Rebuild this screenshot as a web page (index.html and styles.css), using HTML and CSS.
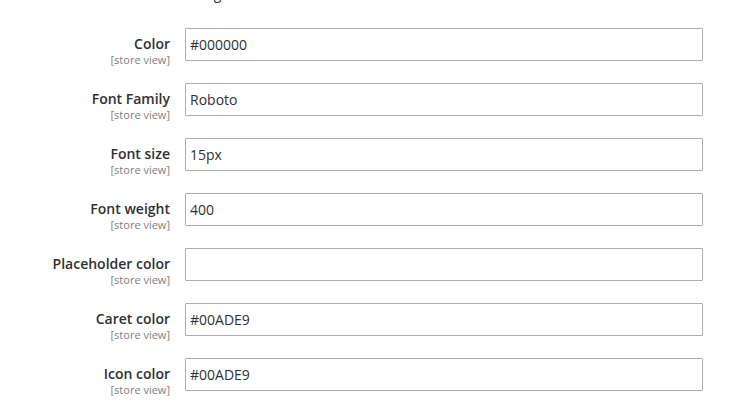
FILE: index.html
```html
<!DOCTYPE html>
<html>
<head>
<meta charset="utf-8">
<link rel="stylesheet" href="styles.css">
</head>
<body>
<div class="top-note"><span class="top-text">Settings</span></div>
<div class="form">
  <div class="row"><div class="label"><span class="name">Color</span><span class="scope">[store view]</span></div><div class="field"><input class="input" value="#000000"></div></div>
  <div class="row"><div class="label"><span class="name">Font Family</span><span class="scope">[store view]</span></div><div class="field"><input class="input" value="Roboto"></div></div>
  <div class="row"><div class="label"><span class="name">Font size</span><span class="scope">[store view]</span></div><div class="field"><input class="input" value="15px"></div></div>
  <div class="row"><div class="label"><span class="name">Font weight</span><span class="scope">[store view]</span></div><div class="field"><input class="input" value="400"></div></div>
  <div class="row"><div class="label"><span class="name">Placeholder color</span><span class="scope">[store view]</span></div><div class="field"><input class="input" value=""></div></div>
  <div class="row"><div class="label"><span class="name">Caret color</span><span class="scope">[store view]</span></div><div class="field"><input class="input" value="#00ADE9"></div></div>
  <div class="row"><div class="label"><span class="name">Icon color</span><span class="scope">[store view]</span></div><div class="field"><input class="input" value="#00ADE9"></div></div>
</div>
</body>
</html>
```
FILE: styles.css
```css
html, body {
  margin: 0;
  padding: 0;
  background: #ffffff;
  overflow: hidden;
}
body {
  font-family: "Open Sans", "Liberation Sans", sans-serif;
  color: #303030;
}
.top-note {
  display: flow-root;
  height: 28px;
  padding-left: 176px;
}
.top-text {
  display: block;
  margin-top: -13px;
  font-size: 14px;
  line-height: 14px;
  color: #303030;
}
.form {
  display: flex;
  flex-direction: column;
  gap: 16px;
}
.row {
  display: grid;
  grid-template-columns: 170px 518px;
  column-gap: 15px;
  align-items: start;
}
.label {
  display: flex;
  flex-direction: column;
  align-items: flex-end;
  padding-top: 7px;
}
.name {
  font-size: 14px;
  font-weight: 600;
  line-height: 18px;
  color: #303030;
}
.scope {
  font-size: 11px;
  line-height: 14px;
  color: #808080;
}
.input {
  display: block;
  box-sizing: border-box;
  width: 518px;
  height: 33px;
  border: 1px solid #adadad;
  border-radius: 1px;
  padding: 0 4px;
  margin: 0;
  font-family: "Open Sans", "Liberation Sans", sans-serif;
  font-size: 14px;
  color: #303030;
  background: #fff;
  outline: none;
}
```
